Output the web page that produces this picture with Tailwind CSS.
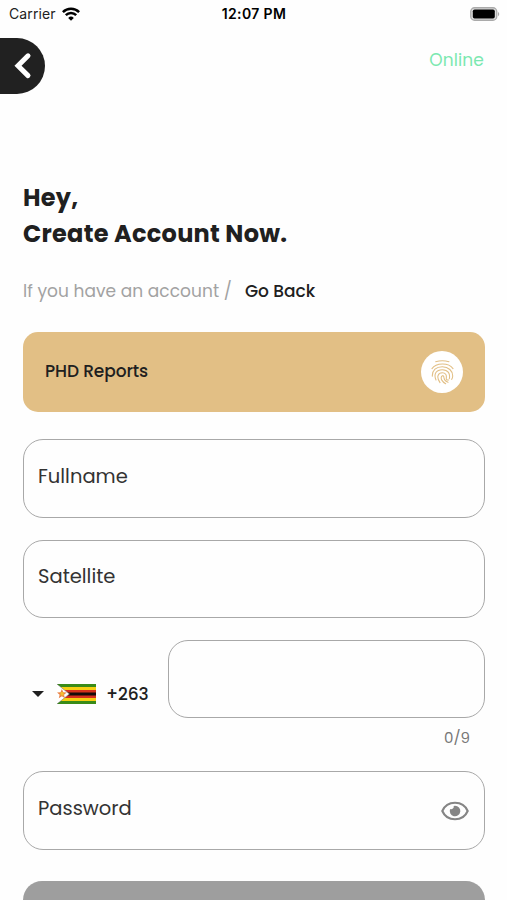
<!DOCTYPE html>
<html lang="en">
<head>
<meta charset="utf-8">
<title>Create Account</title>
<script src="https://cdn.jsdelivr.net/npm/@tailwindcss/browser@4"></script>
</head>
<body class="h-[900px] w-[507px] overflow-hidden bg-[#fefefe] font-['Poppins','Inter',sans-serif] text-[#202020] whitespace-nowrap">
<header class="grid h-[27px] grid-cols-3 items-center pl-[9px] pr-[7px] font-['Inter',sans-serif] text-[14px] text-black">
  <div class="flex items-center gap-[6px] text-[#222]"><span class="tracking-[0.1px]">Carrier</span>
    <svg class="h-[14px] w-[18px]" viewBox="0 0 18 14" fill="none" stroke="#000" stroke-width="2.5"><path d="M.9 5.2a11.5 11.5 0 0 1 16.2 0M3.8 8.2a7.3 7.3 0 0 1 10.4 0"/><path d="M9 13.8 6.2 10.9a4 4 0 0 1 5.6 0Z" fill="#000" stroke="none"/></svg>
  </div>
  <div class="pr-px text-center font-semibold tracking-[0.35px]">12:07 PM</div>
  <svg class="h-[14px] w-[31px] justify-self-end" viewBox="0 0 31 14"><rect x="1.75" y=".75" width="26" height="12.5" rx="3.8" fill="#ddd" stroke="#aaa" stroke-width="1.3"/><rect x="3.8" y="2.5" width="22" height="9" rx="1.8"/><path d="M29 4.7q2.5 2.3 0 4.6Z" fill="#aaa"/></svg>
</header>
<div class="flex justify-between pt-[11px] pr-[23px]">
  <button class="flex h-14 w-[45px] items-center rounded-r-[28px] bg-[#212121] pl-[14px]" aria-label="Back"><svg class="h-[28px] w-[18px]" viewBox="0 0 18 28" fill="none" stroke="#fff" stroke-width="5" stroke-linecap="round"><path d="M14 3.8 4 13.7l10 9.9"/></svg></button>
  <span class="pt-[10px] text-[17px] leading-6 text-[#7be8b0] tracking-[0.1px]">Online</span>
</div>
<main class="pr-[22px] pl-[23px] pt-[86px]">
  <h1 class="text-[24px] leading-9 font-bold tracking-[0.26px]"><span class="block">Hey,</span><span class="block">Create Account Now.</span></h1>
  <p class="mt-[27px] flex gap-[13px] text-[17px] leading-6"><span class="text-[#a2a2a2] tracking-[0.05px]">If you have an account /</span><a class="font-medium">Go Back</a></p>
  <section class="mt-[29px] flex h-20 items-center justify-between rounded-[15px] bg-[#e2bf85] pl-[22px] pr-[22px]">
    <span class="text-[17px] font-medium tracking-[-0.1px]">PHD Reports</span>
    <span class="flex size-[42px] items-center justify-center rounded-full bg-white">
      <svg class="h-[25px] w-[23px]" viewBox="64 59 69 75" fill="none" stroke="#e2bf85" stroke-width="3.2" stroke-linecap="round"><path d="M78 64q20-5 40 0M67 85C79 67 117 66 130 85M68 108C67 89 80 79 98 79s32 13 31 29q0 5-3 9M79 119C71 100 80 88 98 88s24 13 21 27M91 127C79 110 85 97 98 97c10 0 13 8 12 15-1 6 2 8 7 7M108 130C97 124 92 115 96 108c4-5 7 0 7 5 1 6 5 11 12 13"/></svg>
    </span>
  </section>
  <div class="mt-[27px] h-[79px] rounded-[20px] border border-[#a8a8a8] pl-[14px] pt-[23px] text-[19.5px] leading-7 text-[#333]">Fullname</div>
  <div class="mt-[22px] h-[78px] rounded-[20px] border border-[#a8a8a8] pl-[14px] pt-[22px] text-[19.5px] leading-7 text-[#333]">Satellite</div>
  <div class="mt-[22px] flex justify-between">
    <div class="flex h-[78px] items-center pl-[9px] pt-[30px]">
      <svg class="h-[6px] w-[12px]" viewBox="0 0 12 6"><path d="M0 0h12L6 6Z" fill="#202020"/></svg>
      <svg class="ml-[13px] h-5 w-[39px]" viewBox="0 0 40 20" preserveAspectRatio="none"><path fill="#398b18" d="M0 0h40v20H0z"/><path fill="#f6ce12" d="M0 3h40v14H0z"/><path fill="#d5301b" d="M0 6h40v8H0z"/><path fill="#160b0b" d="M0 8.5h40v3H0z"/><path d="M0 0 13 10 0 20Z" fill="#fff"/><path d="m0 0 12.5 10L0 20" fill="none" stroke="#333" stroke-width=".4"/><path d="m5 5 1.4 3.2 3.6.3-2.8 2.2.9 3.5L5 12.3l-3.2 1.9.9-3.5L0 8.5l3.6-.3Z" fill="#e98245"/><path d="M3.5 8h3l.7 3.5H3.7Z" fill="#f2bd31"/></svg>
      <span class="ml-[10px] pt-px text-[17px] font-medium tracking-[-0.1px]">+263</span>
    </div>
    <div class="h-[78px] w-[317px] rounded-[20px] border border-[#a8a8a8]"></div>
  </div>
  <div class="h-[53px] pr-[15px] pt-[9px] text-right text-[15px] leading-[22px] text-[#777]">0/9</div>
  <div class="flex h-[79px] items-start justify-between rounded-[20px] border border-[#a8a8a8] pl-[14px] pr-[15px] pt-[23px] text-[19.5px] leading-7 text-[#333]">
    <span>Password</span>
    <svg class="mt-[6px] h-[20px] w-[28px]" viewBox="0 0 28 20"><path d="M1.3 10C6-1 22-1 26.7 10 22 21 6 21 1.3 10Z" fill="none" stroke="#858585" stroke-width="2.1"/><path d="M14 4.7a5.3 5.3 0 1 1-4.9 3.4 2.7 2.7 0 0 0 3.6-3.2Z" fill="#858585"/></svg>
  </div>
  <button class="mt-[31px] block h-[19px] w-full rounded-t-[19px] bg-[#9e9e9e]" aria-label="Sign up"></button>
</main>
</body>
</html>
